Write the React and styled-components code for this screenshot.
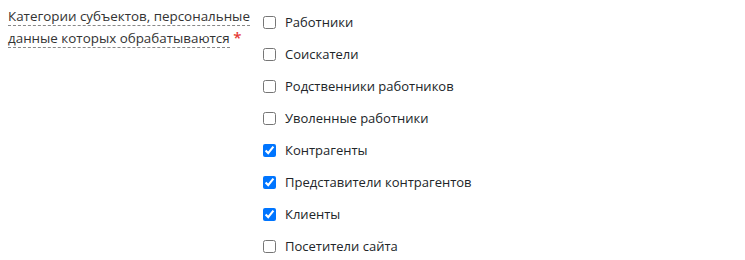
import React from "react";
import styled, { createGlobalStyle } from "styled-components";

const Global = createGlobalStyle`
  body { margin: 0; background: #fff; font-family: "Open Sans", sans-serif; color: #212529; }
`;

const Field = styled.div`
  display: grid;
  grid-template-columns: 255px 1fr;
  padding: 5px 8px;
  font-size: 13px;
`;

const LabelText = styled.div`
  font-size: 13.4px;
  line-height: 20.5px;
  padding-top: 1px;
`;

const Dashed = styled.span`
  border-bottom: 1px dashed #888;
  color: #333;
`;

const Star = styled.span`
  color: #e53935;
  font-size: 15px;
  font-weight: 600;
`;

const List = styled.div`
  display: flex;
  flex-direction: column;
  padding-top: 1px;
`;

const Row = styled.label`
  display: flex;
  align-items: center;
  height: 32px;
  color: #212529;
`;

const Box = styled.input`
  width: 13px;
  height: 13px;
  margin: 0 9px 0 0;
`;

const items = [
  ["Работники", false],
  ["Соискатели", false],
  ["Родственники работников", false],
  ["Уволенные работники", false],
  ["Контрагенты", true],
  ["Представители контрагентов", true],
  ["Клиенты", true],
  ["Посетители сайта", false],
];

export default function App() {
  return (
    <>
      <Global />
      <Field>
        <LabelText>
          <Dashed>Категории субъектов, персональные данные которых обрабатываются</Dashed>{" "}
          <Star>*</Star>
        </LabelText>
        <List>
          {items.map(([t, c]) => (
            <Row key={t}>
              <Box type="checkbox" defaultChecked={c} />
              {t}
            </Row>
          ))}
        </List>
      </Field>
    </>
  );
}
